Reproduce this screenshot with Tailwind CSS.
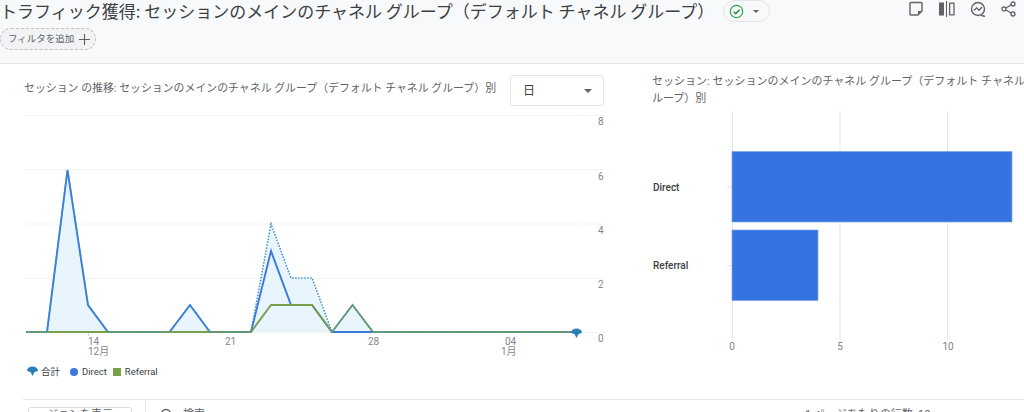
<!DOCTYPE html>
<html lang="ja"><head><meta charset="utf-8">
<script src="https://cdn.jsdelivr.net/npm/@tailwindcss/browser@4"></script>
<title>traffic</title></head>
<body class="m-0 bg-white">
<div class="w-[1024px] h-[412px] overflow-hidden flex flex-col text-[#5f6368] font-['Roboto','Noto_Sans_CJK_JP',sans-serif]">
  <header class="h-[64px] shrink-0 bg-[#f8f9fb] border-b border-[#e3e5e8] relative">
    <div class="h-[28px] flex items-start">
      <h1 class="w-[723px] shrink-0 text-[17px] leading-[21px] font-normal text-[#3c4043] whitespace-nowrap font-['Noto_Sans_CJK_JP',sans-serif]">トラフィック獲得: セッションのメインのチャネル グループ（デフォルト チャネル グループ）</h1>
      <div class="w-[47px] h-[22px] rounded-full border border-[#e3e5e8] flex items-center pl-[5px] gap-[9px] shrink-0">
        <svg width="15" height="15" viewBox="0 0 15 15" fill="none"><circle cx="7.5" cy="7.5" r="6.2" stroke="#34a853" stroke-width="1.3"/><path d="M4.6 7.6l2.1 2.1 3.8-4" stroke="#188038" stroke-width="1.3"/></svg>
        <span class="w-0 h-0 border-x-[3px] border-x-transparent border-t-[3px] border-t-[#5f6368]"></span>
      </div>
      <div class="absolute top-[1px] right-[8px] h-[16px] flex items-center gap-[15px]">
        <svg width="16" height="16" viewBox="0 0 16 16" fill="none"><path d="M2 2.500a1 1 0 0 1 1-1h10a1 1 0 0 1 1 1V10l-4 4H3a1 1 0 0 1-1-1z" stroke="#5f6368" stroke-width="1.4"/><path d="M14 10h-4v4z" fill="#5f6368"/></svg>
        <svg width="16" height="16" viewBox="0 0 16 16" fill="none"><rect x="0" y="1.500" width="5" height="13" fill="#5f6368"/><path d="M7.500 0v16" stroke="#5f6368" stroke-width="1.100"/><rect x="10.600" y="2.200" width="4.400" height="11.600" stroke="#5f6368" stroke-width="1.300"/></svg>
        <svg width="16" height="16" viewBox="0 0 16 16" fill="none"><circle cx="8" cy="8" r="6.500" stroke="#5f6368" stroke-width="1.400"/><path d="M3.800 9.500l2.700-2.700 2.500 2.500 3.200-3.300" stroke="#5f6368" stroke-width="1.300"/><path d="M11 14.300l4 1.200" stroke="#5f6368" stroke-width="1.500"/></svg>
        <svg width="15" height="16" viewBox="0 0 15 16" fill="none"><path d="M12 3L3 8l9 5" stroke="#5f6368" stroke-width="1.200"/><circle cx="12" cy="3" r="2" fill="#f8f9fb" stroke="#5f6368" stroke-width="1.300"/><circle cx="3" cy="8" r="2" fill="#f8f9fb" stroke="#5f6368" stroke-width="1.300"/><circle cx="12" cy="13" r="2" fill="#f8f9fb" stroke="#5f6368" stroke-width="1.300"/></svg>
      </div>
    </div>
    <button class="h-[22px] w-[96px] rounded-full bg-[#f1f3f4] border border-dashed border-[#bdc1c6] flex items-center pl-[7px] gap-[5px] text-[9.500px] leading-none text-[#5f6368]">フィルタを追加
      <svg width="11" height="11" viewBox="0 0 11 11"><path d="M5.500 0v11M0 5.500h11" stroke="#5f6368" stroke-width="1.100"/></svg>
    </button>
  </header>

  <main class="h-[335px] shrink-0 flex">
    <section class="w-[652px] shrink-0 flex flex-col">
      <div class="h-[51px] pt-[2px] pl-[24px] flex items-center">
        <h2 class="text-[10.900px] font-normal text-[#5f6368] whitespace-nowrap w-[486px] shrink-0 -mt-[2px]">セッション の推移: セッションのメインのチャネル グループ（デフォルト チャネル グループ）別</h2>
        <div class="w-[94px] h-[31px] border border-[#e3e5e8] rounded-[3px] flex items-center justify-between pl-[12px] pr-[11px] text-[12px] text-[#3c4043]">日
          <span class="w-0 h-0 border-x-[4px] border-x-transparent border-t-[4px] border-t-[#5f6368]"></span>
        </div>
      </div>
      <svg width="652" height="244" viewBox="0 115 652 244" class="shrink-0" font-family="Roboto, 'Noto Sans CJK JP', sans-serif" font-size="10" fill="#80868b">
        <path d="M26 115.500H578M580 115.500H604M26 169.500H578M580 169.500H604M26 224H578M580 224H604M26 278.500H578M580 278.500H604M26 332.500H578M580 332.500H604" stroke="#f1f3f4" stroke-width="1"/>
        <path d="M47 332L67.500 170L88 305L108 332ZM169.500 332L190 305L210 332ZM251 332L271 224L291 278L312 278L332 332L352.500 305L373 332Z" fill="#e8f5fd"/>
        <path d="M26 332H47L67.500 170L88 305L108 332H169.500L190 305L210 332H251L271 251L291 305L312 305L332 332H577" fill="none" stroke="#3b78e0" stroke-width="1.900"/>
        <path d="M26 332H251L271 305H312L332 332L352.500 305L373 332H577" fill="none" stroke="#7a9f4b" stroke-width="1.900"/>
        <path d="M26 332H47L67.500 170L88 305L108 332H169.500L190 305L210 332H251L271 224L291 278H312L332 332L352.500 305L373 332H577" fill="none" stroke="#3f8fc7" stroke-width="1.500" stroke-dasharray="1.500 1.500"/>
        <path d="M88.500 333v3" stroke="#dadce0"/>
        <path d="M571 332.500a5.500 4 0 0 1 11 0a6 2.500 0 0 1-3.500 1.500l-2 4l-2-4a6 2.500 0 0 1-3.500-1.500z" fill="#2b7fb8"/>
        <text x="598" y="125">8</text><text x="598" y="179.500">6</text><text x="598" y="233.500">4</text><text x="598" y="287.500">2</text><text x="598" y="342">0</text>
        <text x="88" y="345">14</text><text x="88" y="355">12月</text>
        <text x="225" y="345">21</text><text x="368" y="345">28</text><text x="505" y="345">04</text><text x="501" y="355">1月</text>
      </svg>
      <div class="h-[29px] pl-[26px] flex items-start pt-[7px] text-[9.500px] leading-[12px] text-[#3c4043]">
        <svg width="13" height="12" viewBox="0 0 13 12" class="mr-[2px]"><path d="M1 4.500a5.500 4 0 0 1 11 0a6 2.500 0 0 1-3.500 1.500l-2 4l-2-4a6 2.500 0 0 1-3.500-1.500z" fill="#2b7fb8"/></svg>
        <span class="mr-[10px]">合計</span>
        <span class="w-[8px] h-[8px] mt-[2px] rounded-full bg-[#3b78e0] mr-[4px]"></span>
        <span class="mr-[6px]">Direct</span>
        <span class="w-[8px] h-[8px] mt-[2px] bg-[#7a9f4b] mr-[4px]"></span>
        <span>Referral</span>
      </div>
    </section>
    <section class="flex-1 min-w-0 overflow-hidden flex flex-col">
      <h2 class="mt-[9px] h-[34px] text-[11px] leading-[17px] font-normal text-[#5f6368] w-[372px] whitespace-pre overflow-hidden">セッション: セッションのメインのチャネル グループ（デフォルト チャネル グ
ループ）別</h2>
      <svg width="372" height="275" viewBox="652 107 372 275" font-family="Roboto, 'Noto Sans CJK JP', sans-serif" font-size="10">
        <path d="M732.500 111V340M840 111V340M947.500 111V340" stroke="#e3e5e8" stroke-width="1"/>
        <path d="M727 187h5M727 265.500h5" stroke="#e3e5e8"/>
        <rect x="732" y="151.500" width="280" height="70.500" fill="#3574e0" stroke="#7ea6ee" stroke-width="0.700"/>
        <rect x="732" y="230" width="86" height="70.500" fill="#3574e0" stroke="#7ea6ee" stroke-width="0.700"/>
        <text x="653" y="190.500" font-weight="500" fill="#3c4043">Direct</text>
        <text x="653" y="269" font-weight="500" fill="#3c4043">Referral</text>
        <g fill="#80868b" text-anchor="middle"><text x="732" y="350">0</text><text x="840" y="350">5</text><text x="948" y="350">10</text></g>
      </svg>
    </section>
  </main>

  <div class="ml-[23px] h-[13px] flex pl-[5px] relative text-[11px] leading-[14px] text-[#5f6368] overflow-hidden border-t border-[#e3e5e8]">
    <div class="w-[104px] h-[20px] mt-[7px] border border-[#dadce0] rounded-[3px] text-center shrink-0">ジョンを表示</div>
    <div class="ml-[13px] w-px h-full bg-[#e3e5e8]"></div>
    <svg width="14" height="14" viewBox="0 0 14 14" fill="none" class="ml-[14px] mt-[8px]"><circle cx="6" cy="6" r="4.500" stroke="#5f6368" stroke-width="1.300"/></svg>
    <span class="ml-[9px] mt-[8px]">検索</span>
    <span class="absolute left-[782px] top-[8px] whitespace-nowrap">1 ページあたりの行数: 10</span>
  </div>
</div>
</body></html>
